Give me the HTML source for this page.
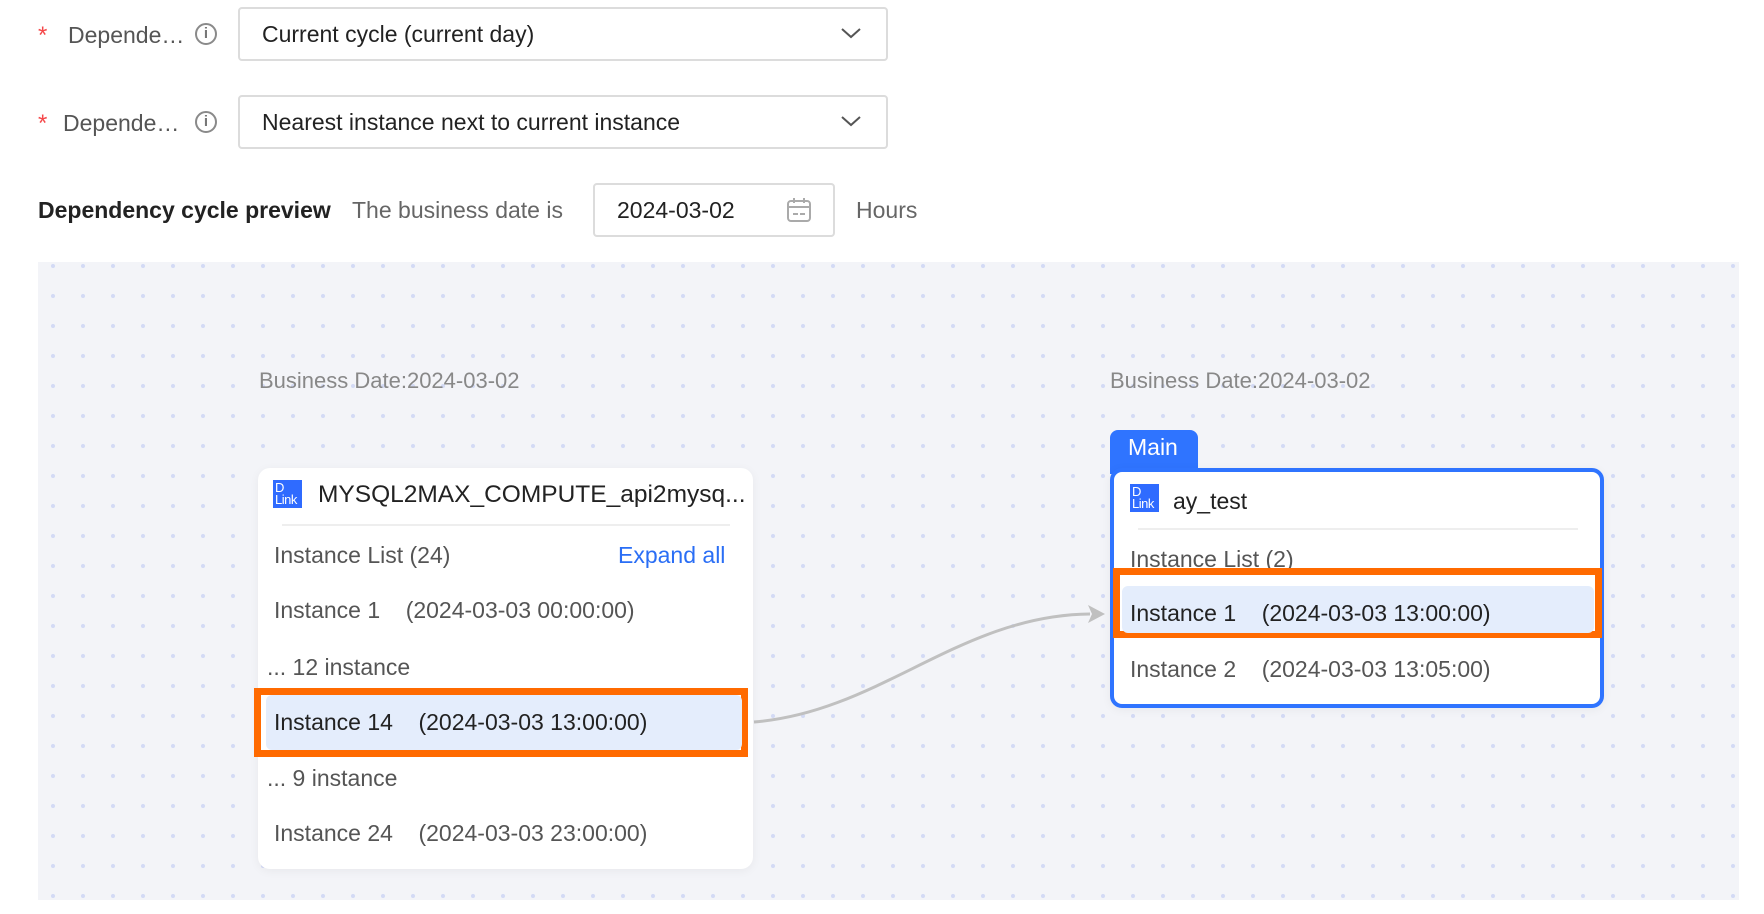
<!DOCTYPE html>
<html><head><meta charset="utf-8"><style>
*{margin:0;padding:0;box-sizing:border-box}
body{width:1764px;height:914px;background:#fff;font-family:"Liberation Sans",sans-serif;position:relative;overflow:hidden;color:#333}
.a{position:absolute}
.ast{color:#f5484a;font-size:24px}
.lbl{font-size:23px;color:#555;line-height:28px}
.info{width:22px;height:22px;border:2px solid #8a8a8a;border-radius:50%;font-family:"Liberation Sans",sans-serif;font-size:15px;color:#777;text-align:center;line-height:18px;font-weight:bold}
.sel{border:2px solid #dcdcdc;border-radius:4px;background:#fff;font-size:23px;color:#222;padding-left:22px;display:flex;align-items:center}
.canvas{left:38px;top:262px;width:1701px;height:638px;background-color:#f3f4f8;background-image:radial-gradient(circle,#d3daf5 1.8px,transparent 2.3px);background-size:30px 30px;background-position:0px -11px}
.card{background:#fff;border-radius:12px;box-shadow:0 2px 10px rgba(0,0,0,.05)}
.icon{width:29px;height:28px;background:#2f6bff;color:#fff;font-size:13px;line-height:12px;padding:2px 0 0 2px;letter-spacing:-0.5px}
.t{font-size:23px;line-height:28px;white-space:nowrap}
.g{color:#555}
.bd{font-size:22px;color:#888}
</style></head><body>
<div class="a ast" style="left:38px;top:22px">*</div>
<div class="a lbl" style="left:68px;top:21px">Depende…</div>
<div class="a info" style="left:195px;top:23px">i</div>
<div class="a sel" style="left:238px;top:7px;width:650px;height:54px">Current cycle (current day)</div>
<svg class="a" style="left:840px;top:26px" width="22" height="14"><path d="M2 3 L11 11 L20 3" fill="none" stroke="#555" stroke-width="2"/></svg>

<div class="a ast" style="left:38px;top:110px">*</div>
<div class="a lbl" style="left:63px;top:109px">Depende…</div>
<div class="a info" style="left:195px;top:111px">i</div>
<div class="a sel" style="left:238px;top:95px;width:650px;height:54px">Nearest instance next to current instance</div>
<svg class="a" style="left:840px;top:114px" width="22" height="14"><path d="M2 3 L11 11 L20 3" fill="none" stroke="#555" stroke-width="2"/></svg>

<div class="a t" style="left:38px;top:196px;font-weight:bold;color:#222;font-size:23px">Dependency cycle preview</div>
<div class="a t" style="left:352px;top:196px;color:#666;font-size:23px">The business date is</div>
<div class="a sel" style="left:593px;top:183px;width:242px;height:54px;padding-left:22px">2024-03-02</div>
<svg class="a" style="left:786px;top:197px" width="26" height="26"><rect x="2" y="4" width="22" height="20" rx="3" fill="none" stroke="#aaa" stroke-width="2"/><path d="M2 10 H24 M8 1 V6 M18 1 V6 M7 17 H12 M14 17 H19" stroke="#aaa" stroke-width="2"/></svg>
<div class="a t" style="left:856px;top:196px;color:#666;font-size:23px">Hours</div>

<div class="a canvas"></div>
<div class="a bd" style="left:259px;top:368px">Business Date:2024-03-02</div>
<div class="a bd" style="left:1110px;top:368px">Business Date:2024-03-02</div>

<svg class="a" style="left:0;top:0" width="1764" height="914"><path d="M754 722 C880 712 960 615 1090 614" fill="none" stroke="#c0c0c0" stroke-width="3"/><path d="M1105 614 L1088 605 L1092 614 L1088 623 Z" fill="#c0c0c0"/></svg>

<div class="a card" style="left:258px;top:468px;width:495px;height:401px"></div>
<div class="a icon" style="left:273px;top:480px">D<br>Link</div>
<div class="a t" style="left:318px;top:481px;color:#222;font-size:24.5px">MYSQL2MAX_COMPUTE_api2mysq...</div>
<div class="a" style="left:282px;top:524px;width:448px;height:2px;background:#eee"></div>
<div class="a t g" style="left:274px;top:541px">Instance List (24)</div>
<div class="a t" style="left:618px;top:541px;color:#2a6ef5">Expand all</div>
<div class="a t g" style="left:274px;top:596px">Instance 1&nbsp;&nbsp;&nbsp; (2024-03-03 00:00:00)</div>
<div class="a t g" style="left:267px;top:653px">... 12 instance</div>
<div class="a" style="left:254px;top:688px;width:494px;height:69px;border:7px solid #ff6a00;background:#fff"></div>
<div class="a" style="left:266px;top:695px;width:476px;height:55px;background:#e4edfc;border-radius:6px"></div>
<div class="a t" style="left:274px;top:708px;color:#222">Instance 14&nbsp;&nbsp;&nbsp; (2024-03-03 13:00:00)</div>
<div class="a t g" style="left:267px;top:764px">... 9 instance</div>
<div class="a t g" style="left:274px;top:819px">Instance 24&nbsp;&nbsp;&nbsp; (2024-03-03 23:00:00)</div>

<div class="a" style="left:1110px;top:430px;width:88px;height:44px;background:#2f74ff;border-radius:8px 8px 0 0;color:#fff;font-size:23px;padding:4px 0 0 18px">Main</div>
<div class="a card" style="left:1110px;top:468px;width:494px;height:240px;border:4px solid #2f74ff"></div>
<div class="a icon" style="left:1130px;top:484px">D<br>Link</div>
<div class="a t" style="left:1173px;top:487px;color:#222">ay_test</div>
<div class="a" style="left:1138px;top:528px;width:440px;height:2px;background:#eee"></div>
<div class="a t g" style="left:1130px;top:545px">Instance List (2)</div>
<div class="a" style="left:1113px;top:568px;width:489px;height:70px;border:7px solid #ff6a00;background:#fff"></div>
<div class="a" style="left:1122px;top:586px;width:472px;height:47px;background:#e4edfc;border-radius:6px"></div>
<div class="a t" style="left:1130px;top:599px;color:#222">Instance 1&nbsp;&nbsp;&nbsp; (2024-03-03 13:00:00)</div>
<div class="a t g" style="left:1130px;top:655px">Instance 2&nbsp;&nbsp;&nbsp; (2024-03-03 13:05:00)</div>
</body></html>
